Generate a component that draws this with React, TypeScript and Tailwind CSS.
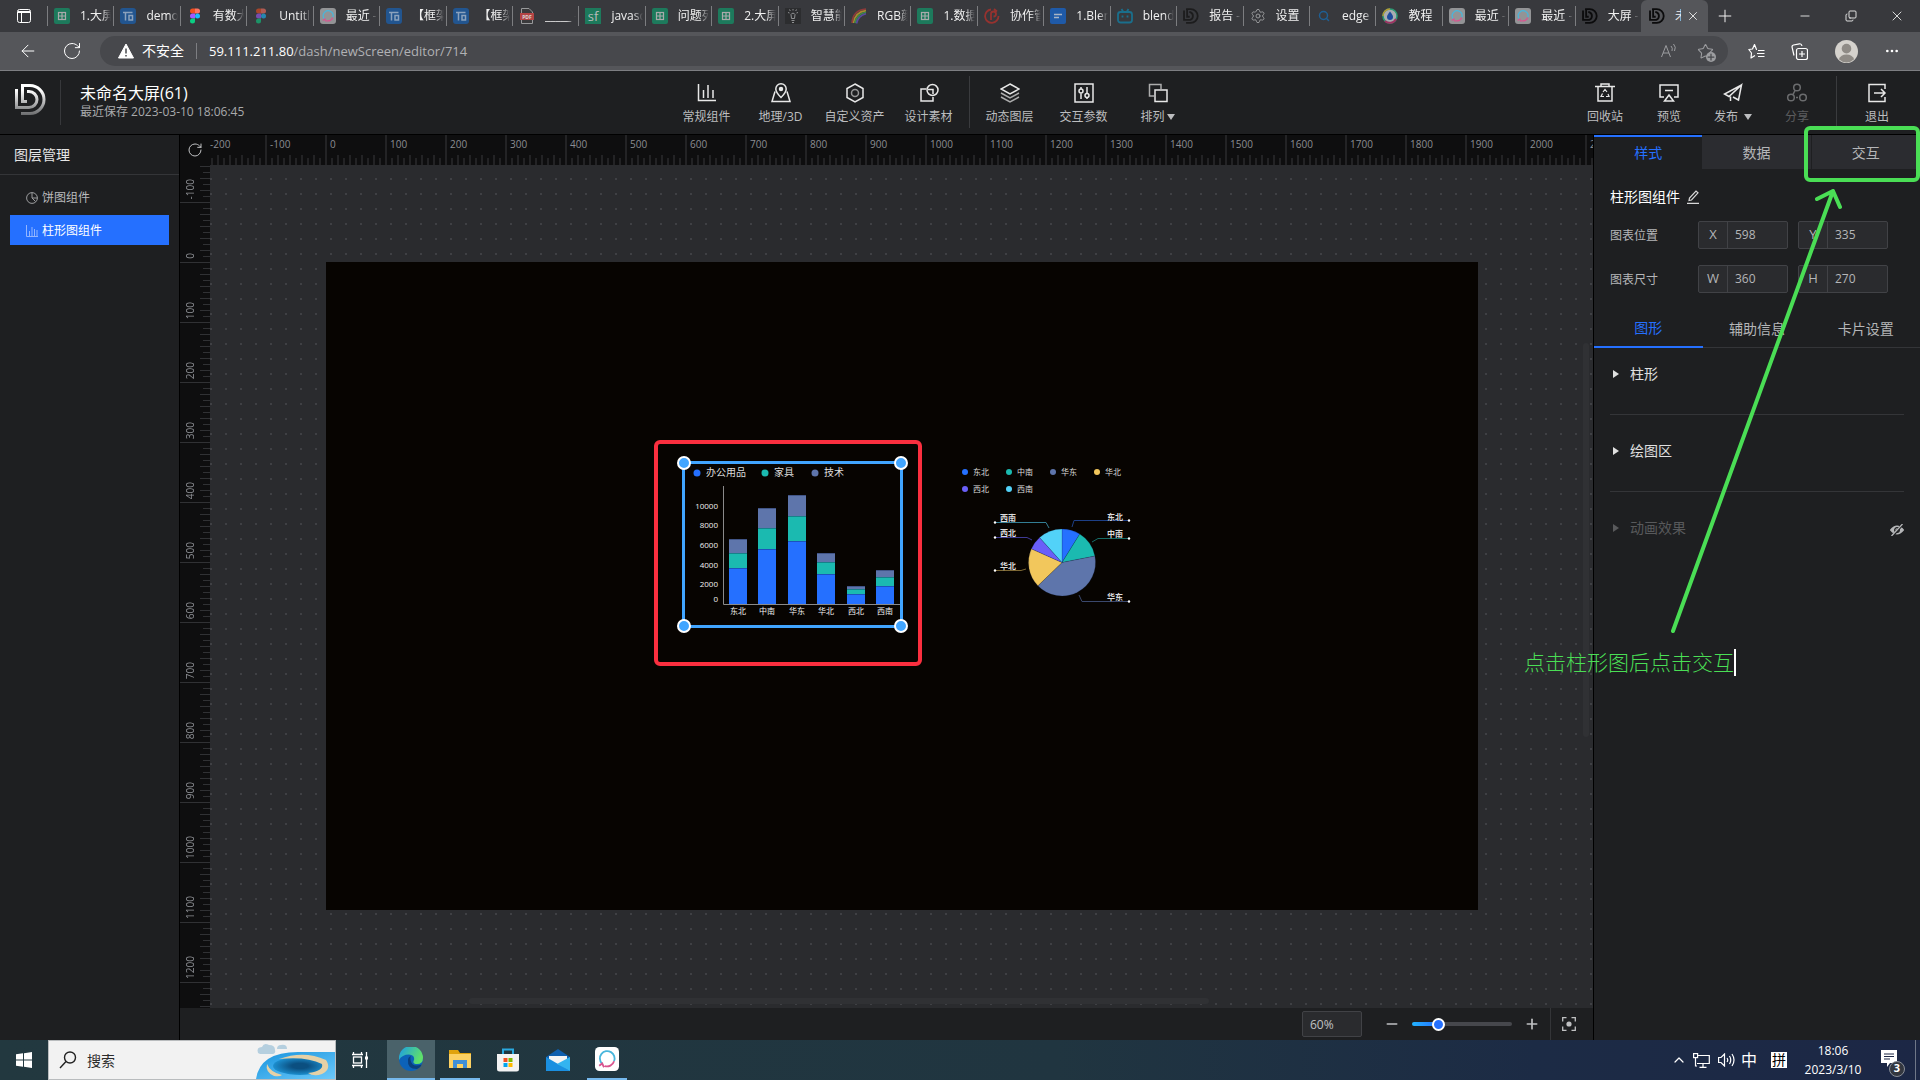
import type { ReactNode } from "react";
import { ArrowLeft, ChevronUp, Copy, Minus, MoreHorizontal, Plus, RotateCw, Search, Settings, Star, X } from "lucide-react";

function DLogo({ className, color = "currentColor" }: { className?: string; color?: string }) {
  return (
    <svg viewBox="0 0 31 31" className={className} fill="none" stroke={color} strokeWidth="3.500">
      <path d="M6 2H15A13.500 13.500 0 0 1 15 29H6" />
      <path d="M2 5V23H14A8 8 0 0 0 14 8H12" />
      <path d="M8 2V17H13" />
    </svg>
  );
}

function SheetIcon() {
  return (
    <svg viewBox="0 0 16 16" className="size-4 shrink-0">
      <rect width="16" height="16" rx="2" fill="#1d7a5c" />
      <rect x="4.500" y="4.500" width="7" height="7" fill="none" stroke="#a9aaab" strokeWidth="1.200" />
      <path d="M4 8H12M8 4V12" stroke="#a9aaab" strokeWidth="1.200" />
    </svg>
  );
}

function TowerIcon() {
  return (
    <svg viewBox="0 0 16 16" className="size-4 shrink-0">
      <rect width="16" height="16" rx="3" fill="#22558f" />
      <path d="M3 4.500H12.500M5.500 5V12.500M9 7.500H12.500V12H9Z" fill="none" stroke="#8ba2bd" strokeWidth="1.500" />
    </svg>
  );
}

function FigmaIcon({ dim }: { dim?: boolean }) {
  return (
    <svg viewBox="0 0 16 16" className={dim ? "size-4 shrink-0 opacity-60" : "size-4 shrink-0"}>
      <path d="M8 .5H5.500a2.500 2.500 0 0 0 0 5H8z" fill="#f24e1e" />
      <path d="M8 .5h2.500a2.500 2.500 0 0 1 0 5H8z" fill="#ff7262" />
      <path d="M8 5.500H5.500a2.500 2.500 0 0 0 0 5H8z" fill="#a259ff" />
      <circle cx="10.500" cy="8" r="2.500" fill="#1abcfe" />
      <path d="M8 10.500H5.500A2.500 2.500 0 1 0 8 13z" fill="#0acf83" />
    </svg>
  );
}

function RingIcon({ className = "size-4", bg = "#939496" }: { className?: string; bg?: string }) {
  return (
    <svg viewBox="0 0 16 16" className={className + " shrink-0"} fill="none" strokeWidth="1.200">
      <rect width="16" height="16" rx="3" fill={bg} />
      <path d="M4.600 11A4.900 4.900 0 1 1 12.700 9.500" stroke="#48b6dc" />
      <path d="M12.700 9.500A4.900 4.900 0 0 1 6.500 12.700M2.800 12.500L4.800 11L6 13.500" stroke="#d8558f" />
    </svg>
  );
}

function PdfIcon() {
  return (
    <svg viewBox="0 0 16 16" className="size-4 shrink-0">
      <path d="M2.500.5H10L13.500 4V15.500H2.500Z" fill="#3a3a3c" stroke="#98999b" />
      <rect x="1" y="5" width="14" height="7" fill="#b34444" />
      <text x="8" y="10.500" fontSize="5" fontWeight="700" fill="#d8d8d8" textAnchor="middle">PDF</text>
    </svg>
  );
}

function SfIcon() {
  return (
    <svg viewBox="0 0 16 16" className="size-4 shrink-0">
      <rect width="16" height="16" fill="#1d7a5c" />
      <text x="8" y="12.500" fontSize="13" fill="#b9bcbb" textAnchor="middle">sf</text>
    </svg>
  );
}

function BulbIcon() {
  return (
    <svg viewBox="0 0 16 16" className="size-4 shrink-0">
      <rect width="16" height="16" fill="#2c2d2f" />
      <path d="M6 6.500A2.200 2.200 0 0 1 10 6.500L9.500 10.500H6.500ZM6.500 12.500H9.500M7 14.500H9M8 1V2.500M4.500 1.500L5.300 3M11.500 1.500L10.700 3M3 4.500L4.500 5M13 4.500L11.500 5" fill="none" stroke="#8f9092" />
    </svg>
  );
}

function RainbowIcon() {
  return (
    <svg viewBox="0 0 16 16" className="size-4 shrink-0" fill="none" strokeWidth="1.600">
      <path d="M1 15Q2 2 15 1" stroke="#8f3a3a" />
      <path d="M2.500 15Q4 4 15 2.600" stroke="#a98a2f" />
      <path d="M4 15Q5.500 6 15 4.200" stroke="#3c8a4a" />
      <path d="M5.500 15.500Q7 8 15 5.800" stroke="#5b4aa0" />
    </svg>
  );
}

function SwirlIcon() {
  return (
    <svg viewBox="0 0 16 16" className="size-4 shrink-0" fill="none" stroke="#96322f" strokeWidth="1.800">
      <path d="M7 1.500A6.700 6.700 0 1 0 14.500 8" />
      <path d="M7 12V6A2.500 2.500 0 1 1 9.500 8.500M10 1L13 3.500" />
    </svg>
  );
}

function DocIcon() {
  return (
    <svg viewBox="0 0 16 16" className="size-4 shrink-0">
      <rect width="16" height="16" rx="2" fill="#1f5aa8" />
      <path d="M4 6.500H12M4 9.500H9" stroke="#a8b4c4" strokeWidth="1.500" />
    </svg>
  );
}

function TvIcon() {
  return (
    <svg viewBox="0 0 16 16" className="size-4 shrink-0" fill="none" stroke="#1a6f8c" strokeWidth="1.800">
      <rect x="1" y="4" width="14" height="10.500" rx="2.500" />
      <path d="M4.500 1L6 3.500M11.500 1L10 3.500M5.500 7.500V9.500M10.500 7.500V9.500" />
    </svg>
  );
}

function DropIcon() {
  return (
    <svg viewBox="0 0 16 16" className="size-4 shrink-0">
      <circle cx="8" cy="8" r="7" fill="#a9acb0" stroke="#2d9a73" strokeWidth="1.500" />
      <path d="M1 8A7 7 0 0 1 8 1" fill="none" stroke="#b79a33" strokeWidth="1.500" />
      <path d="M14 11A7 7 0 0 1 3 13" fill="none" stroke="#a03363" strokeWidth="2" />
      <path d="M8 3.500C10 6 11 7.500 11 9A3 3 0 0 1 5 9C5 7.500 6 6 8 3.500Z" fill="#1f4c9c" />
    </svg>
  );
}

const tabs: { title: string; icon: ReactNode }[] = [
  { title: "1.大屏", icon: <SheetIcon /> },
  { title: "demo", icon: <TowerIcon /> },
  { title: "有数大", icon: <FigmaIcon /> },
  { title: "Untitl", icon: <FigmaIcon dim /> },
  { title: "最近 -", icon: <RingIcon /> },
  { title: "【框架", icon: <TowerIcon /> },
  { title: "【框架", icon: <TowerIcon /> },
  { title: "_____ -", icon: <PdfIcon /> },
  { title: "javasc", icon: <SfIcon /> },
  { title: "问题列", icon: <SheetIcon /> },
  { title: "2.大屏", icon: <SheetIcon /> },
  { title: "智慧能", icon: <BulbIcon /> },
  { title: "RGB颜", icon: <RainbowIcon /> },
  { title: "1.数据", icon: <SheetIcon /> },
  { title: "协作管", icon: <SwirlIcon /> },
  { title: "1.Blen", icon: <DocIcon /> },
  { title: "blend", icon: <TvIcon /> },
  { title: "报告 -", icon: <DLogo className="size-4 shrink-0" color="#1c1c1d" /> },
  { title: "设置", icon: <Settings className="size-4 shrink-0 text-[#98999b]" strokeWidth={1.5} /> },
  { title: "edge", icon: <Search className="mx-0.5 size-3 shrink-0 text-[#1f5f93]" strokeWidth={3} /> },
  { title: "教程", icon: <DropIcon /> },
  { title: "最近 -", icon: <RingIcon /> },
  { title: "最近 -", icon: <RingIcon /> },
  { title: "大屏 -", icon: <DLogo className="size-4 shrink-0" color="#0b0b0c" /> },
];

function BrowserTabs() {
  return (
    <div className="flex h-8 bg-[#38393d] text-xs text-[#f0f0f0]">
      <button aria-label="标签页操作" className="flex w-[47px] items-center justify-center">
        <svg viewBox="0 0 14 14" className="size-3.5" fill="none" stroke="#fff">
          <rect x=".5" y=".5" width="13" height="13" rx="2" />
          <path d="M1 2.500H13M1 3.500H13M4.500 4V13" />
        </svg>
      </button>
      <div className="flex min-w-0 flex-1 items-center">
        {tabs.map((tab, i) => (
          <button key={i} className="flex h-5 min-w-0 flex-1 items-center gap-2.5 border-l border-[#7c7d80] pr-0.5 pl-1.5">
            {tab.icon}
            <span className="min-w-0 flex-1 overflow-hidden text-left whitespace-nowrap [mask-image:linear-gradient(90deg,#000_70%,transparent)]">
              {tab.title}
            </span>
          </button>
        ))}
      </div>
      <div className="flex w-[67px] items-center rounded-t-md bg-[#55565a] pr-2 pl-2">
        <DLogo className="size-4 shrink-0" color="#0b0b0c" />
        <span className="ml-2.5 w-1.5 overflow-hidden whitespace-nowrap">未</span>
        <button aria-label="关闭标签页" className="ml-auto">
          <X className="size-3.5" strokeWidth={1.5} />
        </button>
      </div>
      <button aria-label="新建标签页" className="mr-10 flex w-[34px] items-center justify-center">
        <Plus className="size-5" strokeWidth={1.2} />
      </button>
      <button aria-label="最小化" className="flex w-[46px] items-center justify-center">
        <Minus className="size-3.5" strokeWidth={1.5} />
      </button>
      <button aria-label="还原" className="flex w-[46px] items-center justify-center">
        <Copy className="size-3 -scale-x-100 rotate-180" strokeWidth={1.8} />
      </button>
      <button aria-label="关闭" className="flex w-[46px] items-center justify-center">
        <X className="size-4" strokeWidth={1.3} />
      </button>
    </div>
  );
}

function AddressBar() {
  return (
    <div className="flex h-[39px] items-center border-b border-[#7d7e82] bg-[#55565a] text-white">
      <button aria-label="后退" className="ml-[18px]">
        <ArrowLeft className="size-5" strokeWidth={1.2} />
      </button>
      <button aria-label="刷新" className="ml-6">
        <RotateCw className="size-5" strokeWidth={1.2} />
      </button>
      <div className="ml-[18px] flex h-[30px] min-w-0 flex-1 items-center rounded-full bg-[#47484c] pr-3.5 pl-[18px] text-sm">
        <svg viewBox="0 0 16 16" className="size-4 shrink-0">
          <path d="M8 1L15.500 15H.5Z" fill="#fff" stroke="#fff" strokeLinejoin="round" />
          <path d="M8 5.500V10.500M8 12V13.500" stroke="#47484c" strokeWidth="1.500" />
        </svg>
        <span className="ml-2 shrink-0">不安全</span>
        <span className="mx-3 h-4 w-px bg-[#7d7e82]" />
        <a href="#" className="flex-1 truncate text-[13px] text-[#b0b1b4]">
          <span className="text-white">59.111.211.80</span>/dash/newScreen/editor/714
        </a>
        <button aria-label="大声朗读" className="mr-5">
          <svg viewBox="0 0 16 16" className="size-4" fill="none" stroke="#9c9da0">
            <path d="M.5 14L5 2.500L9.500 14M2 10H8M10 3Q12 5 11 8M12.500 1Q15.500 4 13.500 8" />
          </svg>
        </button>
        <button aria-label="添加收藏" className="relative">
          <Star className="size-[17px] text-[#9c9da0]" strokeWidth={1.5} />
          <Plus className="absolute -right-0.5 -bottom-0.5 size-2.5 rounded-full bg-[#9c9da0] text-[#47484c]" strokeWidth={3} />
        </button>
      </div>
      <div className="flex w-[192px] shrink-0 items-center justify-between pr-5 pl-5">
        <button aria-label="收藏夹">
          <svg viewBox="0 0 17 17" className="size-[17px]" fill="none" stroke="#fff" strokeWidth="1.200">
            <path d="M9 6.500H8.500L6.500 1.500L4.500 6L.8 6.500L3.500 10L3 15L7 12.500M10 7.500H16.500M9 10.500H16.500M10 13.500H16.500" strokeLinejoin="round" />
          </svg>
        </button>
        <button aria-label="集锦">
          <svg viewBox="0 0 17 17" className="size-[17px]" fill="none" stroke="#fff" strokeWidth="1.200">
            <rect x="5.500" y="5.500" width="11" height="11" rx="2" />
            <path d="M11 8V14M8 11H14M3 12.500L1 4Q.8 2.500 2.500 2L8.500.8Q10.500.5 11 3" />
          </svg>
        </button>
        <button aria-label="个人资料">
          <svg viewBox="0 0 24 24" className="size-[23px]">
            <circle cx="12" cy="12" r="12" fill="#d5d2cd" />
            <circle cx="12" cy="9" r="5" fill="#8f8b86" />
            <path d="M4 20Q6 15 12 15T20 20Q12 27 4 20Z" fill="#8f8b86" />
          </svg>
        </button>
        <button aria-label="更多">
          <MoreHorizontal className="size-4" />
        </button>
      </div>
    </div>
  );
}

function ToolIcon({ children }: { children: ReactNode }) {
  return (
    <svg viewBox="0 0 20 20" className="size-5" fill="none" stroke="currentColor" strokeWidth="1.500">
      {children}
    </svg>
  );
}

function ToolButton({ label, icon, caret, wide, disabled }: { label: string; icon: ReactNode; caret?: "near" | "far"; wide?: boolean; disabled?: boolean }) {
  return (
    <button
      disabled={disabled}
      className={`flex flex-col items-center gap-1 pt-3 ${wide ? "w-[74px]" : "w-16"} ${disabled ? "text-[#6b6c6e]" : "text-[#e8e8e8]"}`}
    >
      <ToolIcon>{icon}</ToolIcon>
      <span className={`flex items-center text-xs leading-5 whitespace-nowrap ${disabled ? "text-[#5c5d5f]" : "text-[#bcbdbf]"}`}>
        {label}
        {caret && (
          <svg viewBox="0 0 8 6" className={caret === "far" ? "ml-1.5 h-1.5 w-2" : "ml-0.5 h-1.5 w-2"}>
            <path d="M0 0H8L4 6Z" fill="currentColor" />
          </svg>
        )}
      </span>
    </button>
  );
}

function Header() {
  return (
    <header className="flex h-16 border-b border-black bg-[#1e1f21]">
      <div className="flex w-[291px] shrink-0">
        <svg viewBox="0 0 31 31" className="mt-[13px] ml-[15px] size-[31px]" fill="none" stroke="url(#logo)" strokeWidth="3">
          <defs>
            <linearGradient id="logo" x1="0" y1="0" x2="0" y2="31" gradientUnits="userSpaceOnUse">
              <stop offset=".2" stopColor="#fff" />
              <stop offset="1" stopColor="#6a6b6d" />
            </linearGradient>
          </defs>
          <path d="M6 1.500H15A14 14 0 0 1 15 29.500H6" />
          <path d="M1.500 5V23.500H14A8 8 0 0 0 14 7.500H12" />
          <path d="M7.500 1.500V17.500H12" />
        </svg>
        <span className="mt-[9px] ml-3.5 h-[45px] w-px bg-[#37383b]" />
        <div className="ml-[19px] pt-[11px]">
          <h1 className="text-base leading-[22px] text-white">未命名大屏(61)</h1>
          <p className="text-xs leading-4 text-[#a9aaac]">最近保存 2023-03-10 18:06:45</p>
        </div>
      </div>
      <div className="mx-auto flex">
        <ToolButton wide label="常规组件" icon={<path d="M1.500 1V17.500H19M6.500 7V15M11 2V15M16 7V15" />} />
        <ToolButton
          wide
          label="地理/3D"
          icon={
            <>
              <path d="M4 8.500L1 18.500H19L16 8.500" />
              <path d="M10 14.500C6.500 11 4.800 8.500 4.800 6A5.200 5.200 0 0 1 15.200 6C15.200 8.500 13.500 11 10 14.500Z" />
              <circle cx="10" cy="6" r="1.500" fill="currentColor" />
            </>
          }
        />
        <ToolButton
          wide
          label="自定义资产"
          icon={
            <>
              <path d="M10 1L18 5.500V14.500L10 19L2 14.500V5.500Z" />
              <circle cx="10" cy="10" r="3.500" opacity=".6" />
            </>
          }
        />
        <ToolButton
          wide
          label="设计素材"
          icon={
            <>
              <path d="M7 6H2V18H14V14" />
              <circle cx="13.500" cy="7" r="5.500" />
              <path d="M9 6.500H14V11" />
            </>
          }
        />
        <span className="mx-[3px] mt-[5px] h-[52px] w-px bg-[#3a3b3e]" />
        <ToolButton
          wide
          label="动态图层"
          icon={
            <>
              <path d="M10 1L19 6L10 11L1 6Z" />
              <path d="M1 10L10 15L19 10M1 14L10 19L19 14" opacity=".7" />
            </>
          }
        />
        <ToolButton
          wide
          label="交互参数"
          icon={
            <>
              <rect x="1" y="1" width="18" height="18" />
              <path d="M7 4V6M7 10.500V16M13 4V10M13 14.500V16" />
              <circle cx="7" cy="8" r="2" />
              <circle cx="13" cy="12.500" r="2" />
            </>
          }
        />
        <ToolButton
          wide
          label="排列"
          caret="near"
          icon={
            <>
              <path d="M6 13H1.500V1.500H13V6" opacity=".7" />
              <rect x="7" y="7" width="12" height="11.500" />
            </>
          }
        />
      </div>
      <div className="flex shrink-0">
        <ToolButton
          label="回收站"
          icon={
            <>
              <path d="M0 3.500H20M3 4V18H17V4M6 3V1H14V3" />
              <path d="M8 9L10 6.500L12 9M13 11L14 13.500H11M9 13.500H6L7.500 10.500" strokeWidth="1.200" />
            </>
          }
        />
        <ToolButton label="预览" icon={<path d="M5 14H1V2H19V14H15M6 7.500H14M10 12L14.500 18H5.500Z" />} />
        <ToolButton label="发布" caret="far" icon={<path d="M18.500 2L1.500 11L6 13.500L18.500 2L15.500 17L10 14M7.500 18V13.500" />} />
        <ToolButton
          disabled
          label="分享"
          icon={
            <>
              <circle cx="10" cy="4.500" r="3.300" />
              <circle cx="4" cy="14.500" r="3.300" />
              <circle cx="16" cy="14.500" r="3.300" />
              <path d="M8 7.500L6 11.500M9 14.500H11" />
            </>
          }
        />
        <span className="mt-[5px] ml-[7px] h-[52px] w-px bg-[#3a3b3e]" />
        <span className="w-2" />
        <ToolButton label="退出" icon={<path d="M18 6V1.500H2V18.500H18V14M7 10H18M14 6L18 10L14 14" />} />
        <span className="w-[11px]" />
      </div>
    </header>
  );
}

function LayerPanel() {
  return (
    <aside className="w-[180px] shrink-0 border-r border-black bg-[#1e1f21]">
      <h2 className="flex h-10 items-center border-b border-[#343538] pl-3.5 text-sm text-[#e6e6e6]">图层管理</h2>
      <ul className="flex flex-col gap-[3px] px-2.5 pt-[7px] text-xs">
        <li>
          <button className="flex h-[30px] w-full items-center gap-1 pt-0.5 pl-4 text-[#b9babc]">
            <svg viewBox="0 0 12 12" className="size-3" fill="none" stroke="#9b9c9e">
              <circle cx="6" cy="6" r="5.400" />
              <path d="M6 .5V6H11.500M6 6L9.500 9.500" />
            </svg>
            饼图组件
          </button>
        </li>
        <li>
          <button className="flex h-[30px] w-full items-center gap-1 bg-[#2570ff] pt-0.5 pl-4 text-white">
            <svg viewBox="0 0 12 12" className="size-3" fill="none" stroke="#93b6ff">
              <path d="M.5 0V11.500H12M3.500 6V11M6 2V11M8.500 4V11M11 5V11" />
            </svg>
            柱形图组件
          </button>
        </li>
      </ul>
    </aside>
  );
}

const columns = Array.from({ length: 24 }, (_, i) => -200 + i * 100);
const rows = Array.from({ length: 15 }, (_, i) => -100 + i * 100);
const minor = [0, 1, 2, 3, 4, 5, 6, 7, 8];

function HorizontalRuler() {
  return (
    <div className="h-[30px] min-w-0 flex-1 overflow-hidden">
      <div className="-ml-[5px] flex h-full">
        {columns.map((n) => (
          <div key={n} className="flex h-full w-[60px] shrink-0 flex-col justify-between border-l-2 border-[#232325]">
            <span className="pt-0.5 pl-[3px] text-[10px] leading-[14px] text-[#8b8d92]">{n}</span>
            <div className="flex items-end gap-1 pl-1">
              {minor.map((m) => (
                <i key={m} className={m % 2 ? "h-2.5 w-0.5 bg-[#232325]" : "h-[7px] w-0.5 bg-[#232325]"} />
              ))}
            </div>
          </div>
        ))}
      </div>
    </div>
  );
}

function VerticalRuler() {
  return (
    <div className="relative w-[30px] shrink-0 overflow-hidden bg-[#0e0e0f]">
      <div className="absolute inset-x-0 -top-[22px]">
        {rows.map((n) => (
          <div key={n} className="flex h-[60px] justify-between border-b border-[#303134]">
            <span className="rotate-180 self-end pt-[3px] pr-[3px] text-[10px] leading-[14px] text-[#8b8d92] [writing-mode:vertical-rl]">
              {n}
            </span>
            <div className="flex flex-col items-end gap-[5px] pt-[5px]">
              {minor.map((m) => (
                <i key={m} className={m % 2 ? "h-px w-2.5 bg-[#303134]" : "h-px w-[7px] bg-[#303134]"} />
              ))}
            </div>
          </div>
        ))}
      </div>
    </div>
  );
}

const blue = "#2570ff";
const teal = "#1bbab0";
const slate = "#5e75ab";

// y values of the segment edges, from the top of the stack to the axis
const bars = [
  { name: "东北", x: 44, y: [76, 90, 105] },
  { name: "中南", x: 73, y: [45, 65, 86] },
  { name: "华东", x: 103, y: [32, 53, 78] },
  { name: "华北", x: 132, y: [90, 99, 111] },
  { name: "西北", x: 162, y: [123, 126, 131] },
  { name: "西南", x: 191, y: [107, 114, 123] },
];

const yAxis = [
  { label: "10000", y: 46 },
  { label: "8000", y: 65 },
  { label: "6000", y: 85 },
  { label: "4000", y: 105 },
  { label: "2000", y: 124 },
  { label: "0", y: 139 },
];

function BarChart() {
  return (
    <svg viewBox="0 0 216 162" className="h-[162px] w-[216px]" fill="#dcdcdc">
      <g fontSize="10">
        <circle cx="12" cy="10" r="3.500" fill={blue} />
        <text x="21" y="13">办公用品</text>
        <circle cx="80" cy="10" r="3.500" fill={teal} />
        <text x="89" y="13">家具</text>
        <circle cx="130" cy="10" r="3.500" fill={slate} />
        <text x="139" y="13">技术</text>
      </g>
      <path d="M38.500 23V141.500H215" fill="none" stroke="#8a8a8a" />
      {yAxis.map((t) => (
        <text key={t.label} x="33" y={t.y} fontSize="8" fill="#f0f0f0" textAnchor="end">{t.label}</text>
      ))}
      {bars.map((b) => (
        <g key={b.name}>
          <rect x={b.x} y={b.y[0]} width="18" height={b.y[1] - b.y[0]} fill={slate} />
          <rect x={b.x} y={b.y[1]} width="18" height={b.y[2] - b.y[1]} fill={teal} />
          <rect x={b.x} y={b.y[2]} width="18" height={141 - b.y[2]} fill={blue} />
          <path d={`M${b.x} ${b.y[0] + 0.5}h18M${b.x} ${b.y[1] + 0.5}h18M${b.x} ${b.y[2] + 0.5}h18`} stroke="#0b1b44" strokeOpacity=".35" />
          <text x={b.x + 9} y="151" fontSize="8" fill="#f0f0f0" textAnchor="middle">{b.name}</text>
        </g>
      ))}
    </svg>
  );
}

const slices = [
  { name: "东北", color: blue, from: 0, to: 32 },
  { name: "中南", color: teal, from: 32, to: 79 },
  { name: "华东", color: slate, from: 79, to: 226 },
  { name: "华北", color: "#f2c75c", from: 226, to: 294 },
  { name: "西北", color: "#6a5ff8", from: 294, to: 318 },
  { name: "西南", color: "#52d2f8", from: 318, to: 360 },
];

const legendSpots = [[10, 9], [54, 9], [98, 9], [142, 9], [10, 26], [54, 26]];

const callouts = [
  { name: "东北", color: "#1d3f86", line: "M117 64L119 57.500H174", x: 152, y: 57, dot: [174, 57.5] },
  { name: "中南", color: "#176a66", line: "M137 79L143 75.500H174", x: 152, y: 74, dot: [174, 75.5] },
  { name: "华东", color: "#3a486c", line: "M124 132L127 138.500H174", x: 152, y: 137, dot: [174, 138.5] },
  { name: "华北", color: "#7d6834", line: "M71 106L66 107.500H40", x: 45, y: 106, dot: [40, 107.5] },
  { name: "西北", color: "#3f3a95", line: "M77 77L72 74.500H40", x: 45, y: 73, dot: [40, 74.5] },
  { name: "西南", color: "#337e94", line: "M94 65L91 59.500H40", x: 45, y: 58, dot: [40, 59.5] },
];

function arc(from: number, to: number) {
  const point = (deg: number) => {
    const a = (deg * Math.PI) / 180;
    return `${107 + 33.5 * Math.sin(a)} ${99.5 - 33.5 * Math.cos(a)}`;
  };
  return `M107 99.500L${point(from)}A33.500 33.500 0 ${to - from > 180 ? 1 : 0} 1 ${point(to)}Z`;
}

function PieChart() {
  return (
    <svg viewBox="0 0 216 162" className="h-[162px] w-[216px]" fill="#dcdcdc" fontSize="8">
      {slices.map((s, i) => (
        <g key={s.name}>
          <circle cx={legendSpots[i][0]} cy={legendSpots[i][1]} r="3" fill={s.color} />
          <text x={legendSpots[i][0] + 8} y={legendSpots[i][1] + 3}>{s.name}</text>
          <path d={arc(s.from, s.to)} fill={s.color} stroke="#0b1b44" strokeOpacity=".3" strokeWidth=".6" />
        </g>
      ))}
      {callouts.map((c) => (
        <g key={c.name}>
          <path d={c.line} fill="none" stroke={c.color} />
          <circle cx={c.dot[0]} cy={c.dot[1]} r="1.200" fill="#fff" />
          <text x={c.x} y={c.y} fontWeight="700">{c.name}</text>
        </g>
      ))}
    </svg>
  );
}

function Canvas() {
  return (
    <div className="relative min-w-0 flex-1 overflow-hidden bg-[#2a2b2e] bg-[radial-gradient(circle_at_1px_1px,#3f4044_1px,transparent_1px)] bg-size-[15px_15px] bg-position-[0_13px]">
      <div className="absolute top-[97px] left-[116px] h-[648px] w-[1152px] bg-[#070401]">
        <div className="absolute top-[201px] left-[359px]">
          <BarChart />
        </div>
        <div className="absolute top-[201px] left-[629px]">
          <PieChart />
        </div>
        <div className="absolute top-[199px] left-[356px] h-[167px] w-[221px] border-[3px] border-[#41a5ff]">
          <i className="absolute -top-2 -left-2 size-3.5 rounded-full border-2 border-white bg-[#41a5ff]" />
          <i className="absolute -top-2 -right-2 size-3.5 rounded-full border-2 border-white bg-[#41a5ff]" />
          <i className="absolute -bottom-2 -left-2 size-3.5 rounded-full border-2 border-white bg-[#41a5ff]" />
          <i className="absolute -right-2 -bottom-2 size-3.5 rounded-full border-2 border-white bg-[#41a5ff]" />
        </div>
        <div className="absolute top-[178px] left-[328px] h-[226px] w-[268px] rounded-md border-4 border-[#fa2f3f]" />
      </div>
      <div className="absolute top-[178px] right-1 h-[394px] w-1.5 rounded-full bg-[#303134]" />
      <div className="absolute bottom-1 left-[259px] h-1.5 w-[740px] rounded-full bg-[#303134]" />
    </div>
  );
}

function ZoomBar() {
  return (
    <div className="flex h-8 items-center justify-end bg-[#1e1f21] text-[#c0c1c3]">
      <input
        aria-label="缩放比例"
        defaultValue="60%"
        className="h-[26px] w-[60px] rounded-xs border border-[#414246] bg-[#2a2b2e] pl-[7px] text-xs"
      />
      <button aria-label="缩小" className="ml-[22px]">
        <Minus className="size-4" strokeWidth={2.5} />
      </button>
      <input
        type="range"
        aria-label="缩放"
        min={0}
        max={100}
        defaultValue={23}
        className="ml-3 h-1 w-[100px] appearance-none rounded-full bg-[linear-gradient(90deg,#22b4ff,#2570ff_26%,#46474c_26%)] [&::-webkit-slider-thumb]:size-[13px] [&::-webkit-slider-thumb]:appearance-none [&::-webkit-slider-thumb]:rounded-full [&::-webkit-slider-thumb]:border-2 [&::-webkit-slider-thumb]:border-white [&::-webkit-slider-thumb]:bg-[#2570ff]"
      />
      <button aria-label="放大" className="ml-3">
        <Plus className="size-4" strokeWidth={2.5} />
      </button>
      <span className="ml-2.5 h-full w-px bg-[#343538]" />
      <button aria-label="适应屏幕" className="flex w-[42px] justify-center pr-1.5">
        <svg viewBox="0 0 14 14" className="size-3.5" fill="none" stroke="currentColor" strokeWidth="1.300">
          <path d="M.7 4.500V.7H4.500M9.500.7H13.300V4.500M13.300 9.500V13.300H9.500M4.500 13.300H.7V9.500" />
          <circle cx="7" cy="7" r="2.600" fill="currentColor" stroke="none" />
        </svg>
      </button>
    </div>
  );
}

function NumberField({ name, value, label }: { name: string; value: string; label: string }) {
  return (
    <label className="flex h-7 w-[90px] rounded-xs border border-[#414246] bg-[#2a2b2e] text-[#b5b6b8]">
      <span className="flex w-[29px] items-center justify-center border-r border-[#414246] text-[13px]">{name}</span>
      <input aria-label={`${label} ${name}`} defaultValue={value} className="w-full min-w-0 flex-1 pl-[7px] text-xs" />
    </label>
  );
}

function FieldRow({ label, fields }: { label: string; fields: [string, string][] }) {
  return (
    <div className="flex items-center gap-2.5 pl-4">
      <span className="w-[78px] pt-0.5 text-xs text-[#b5b6b8]">{label}</span>
      {fields.map(([name, value]) => (
        <NumberField key={name} name={name} value={value} label={label} />
      ))}
    </div>
  );
}

const sections = [
  { title: "柱形", off: false },
  { title: "绘图区", off: false },
  { title: "动画效果", off: true },
];

function StylePanel() {
  return (
    <aside className="w-[327px] shrink-0 border-l border-black bg-[#1e1f21]">
      <nav className="flex h-[34px] text-sm text-[#b5b6b8]">
        <button className="flex-1 border-t-2 border-[#2570ff] text-[#2570ff]">样式</button>
        <button className="flex-1 bg-[#2b2c30] pt-0.5">数据</button>
        <button className="flex-1 border-l border-[#1e1f21] bg-[#2b2c30] pt-0.5">交互</button>
      </nav>
      <div className="mt-[18px] mb-3.5 flex h-5 items-center gap-1.5 pl-4">
        <h2 className="text-sm text-white">柱形图组件</h2>
        <button aria-label="重命名">
          <svg viewBox="0 0 14 14" className="size-3.5" fill="none" stroke="#d8d8d8" strokeWidth="1.200">
            <path d="M1 13.300H13M3 10.500L3.500 8L10 1L12 2.800L5.500 10Z" />
          </svg>
        </button>
      </div>
      <div className="flex flex-col gap-4">
        <FieldRow label="图表位置" fields={[["X", "598"], ["Y", "335"]]} />
        <FieldRow label="图表尺寸" fields={[["W", "360"], ["H", "270"]]} />
      </div>
      <nav className="mt-[17px] flex h-[38px] text-sm text-[#b5b6b8]">
        <button className="flex-1 border-b-2 border-[#2570ff] text-[#2570ff]">图形</button>
        <button className="flex-1 border-b border-[#343538]">辅助信息</button>
        <button className="flex-1 border-b border-[#343538]">卡片设置</button>
      </nav>
      <div className="px-4">
        {sections.map((s) => (
          <section key={s.title} className="flex items-center border-b border-[#343538] pt-[26px] pb-[30px] first:pt-4 last:border-0">
            <button
              disabled={s.off}
              className={`flex h-5 items-center gap-[11px] pl-[3px] text-sm ${s.off ? "text-[#58595b]" : "text-[#e0e0e0]"}`}
            >
              <svg viewBox="0 0 6 8" className="h-2 w-1.5">
                <path d="M0 0L6 4L0 8Z" fill="currentColor" />
              </svg>
              {s.title}
            </button>
            {s.off && (
              <button aria-label="显示动画效果" className="ml-auto pt-1">
                <svg viewBox="0 0 14 12" className="h-3 w-3.5" fill="none" stroke="#b5b6b8" strokeWidth="1.300">
                  <path d="M.7 6Q7-1.500 13.300 6Q7 13.500.7 6Z" fill="#b5b6b8" />
                  <circle cx="7" cy="6" r="2.300" stroke="#1e1f21" />
                  <path d="M2.500 12L12.500.5" stroke="#1e1f21" strokeWidth="2.500" />
                  <path d="M1.500 12L12.500 0" />
                </svg>
              </button>
            )}
          </section>
        ))}
      </div>
    </aside>
  );
}

function Annotations() {
  return (
    <>
      <div className="absolute top-[126px] right-0 h-14 w-[116px] rounded-md border-4 border-[#4ade55]" />
      <svg viewBox="0 0 260 460" className="pointer-events-none absolute top-[180px] right-0 h-[460px] w-[260px]" fill="none" stroke="#4ade55" strokeWidth="4" strokeLinecap="round" strokeLinejoin="round">
        <path d="M13 451L173 11M157 19L173 11L180 27" />
      </svg>
      <p className="absolute top-[649px] right-[184px] border-r-2 border-white text-[21px] leading-[27px] font-light whitespace-nowrap text-[#4ade55]">
        点击柱形图后点击交互
      </p>
    </>
  );
}

function Taskbar() {
  return (
    <footer className="flex h-10 items-center bg-[linear-gradient(90deg,#22383f,#203540_55%,#1c2b45_80%,#1c2745)] text-xs text-white">
      <button aria-label="开始" className="flex w-12 justify-center">
        <svg viewBox="0 0 16 16" className="size-4" fill="#fff">
          <path d="M0 2.300L7 1.300V7.500H0ZM8 1.200L16 0V7.500H8ZM0 8.500H7V14.700L0 13.700ZM8 8.500H16V16L8 14.800Z" />
        </svg>
      </button>
      <div className="flex h-full w-72 items-center border border-[#b9bcbe] bg-[#f2f2f2] pl-2.5">
        <svg viewBox="0 0 18 18" className="size-[18px] shrink-0" fill="none" stroke="#222" strokeWidth="1.400">
          <circle cx="11" cy="6.500" r="5.500" />
          <path d="M7 10.500L1 17" />
        </svg>
        <input aria-label="搜索" placeholder="搜索" className="ml-2.5 min-w-0 flex-1 pt-0.5 text-sm text-black placeholder:text-[#2c2c2c]" />
        <svg viewBox="0 0 79 38" className="h-[38px] w-[79px] shrink-0">
          <defs>
            <linearGradient id="sea" x1="0" y1="0" x2="1" y2="1">
              <stop offset="0" stopColor="#1793dd" />
              <stop offset="1" stopColor="#6cc9fb" />
            </linearGradient>
            <radialGradient id="hole">
              <stop offset=".3" stopColor="#0b4f80" />
              <stop offset="1" stopColor="#1c8fd0" />
            </radialGradient>
          </defs>
          <path d="M2 12Q0 6 6 6Q8 1 13 4Q19 4 19 9Q20 12 17 13H4ZM21 8Q21 4 25 4Q31 3 31 8Z" fill="#b5cfdf" />
          <path d="M0 38Q4 11 42 11H79V38Z" fill="url(#sea)" />
          <ellipse cx="44" cy="25" rx="27" ry="9" fill="url(#hole)" />
          <path d="M23 18Q48 9 70 19Q76 28 66 33Q58 36 52 32Q68 30 66 23Q50 15 23 18ZM11 23Q14 31 26 34Q24 36 18 35Q9 31 11 23Z" fill="#e6d1a6" />
        </svg>
      </div>
      <button aria-label="任务视图" className="flex w-[51px] justify-center pr-1">
        <svg viewBox="0 0 16 16" className="size-4" fill="none" stroke="#fff" strokeWidth="1.300">
          <path d="M0 2.500H11M0 13.500H11M1.500 0V2M9.500 0V2M1.500 14V16M9.500 14V16M14.500 0V16" />
          <rect x="1.500" y="5" width="8" height="6" />
          <path d="M13 6H16" strokeWidth="3" />
        </svg>
      </button>
      <button aria-label="Edge" className="flex h-full w-12 items-center justify-center border-b-2 border-[#76b9ed] bg-[#4a626a]">
        <svg viewBox="0 0 24 24" className="size-6">
          <defs>
            <linearGradient id="edge" x1="0" y1="0" x2="1" y2=".4">
              <stop offset="0" stopColor="#1a9be8" />
              <stop offset="1" stopColor="#5fe06a" />
            </linearGradient>
          </defs>
          <circle cx="12" cy="12" r="12" fill="#0c62b8" />
          <path d="M0 11A12 12 0 0 1 24 11Q24 17 18 17Q13 17 15 13Q16 8 10 7.500Q3 7.500 0 13Z" fill="url(#edge)" />
          <path d="M9 13Q8 22 18 22Q22 20 22.500 17.500Q13 21 11.500 13Q11 10 12 9Q9 10 9 13Z" fill="#0a3f7c" />
        </svg>
      </button>
      <button aria-label="文件资源管理器" className="ml-[5px] flex h-full w-10 items-center justify-center border-b-2 border-[#76b9ed]">
        <svg viewBox="0 0 22 20" className="h-5 w-[22px]">
          <path d="M0 1H9L11 4H22V19H0Z" fill="#e0a30d" />
          <path d="M0 5H22V19H0Z" fill="#fcd163" />
          <path d="M4 19V11H18V19H14V15H8V19Z" fill="#3f8fd8" />
        </svg>
      </button>
      <button aria-label="应用商店" className="flex w-14 justify-center">
        <svg viewBox="0 0 22 24" className="h-6 w-[22px]">
          <path d="M6 7V1.500H16V7" fill="none" stroke="#2aa9e0" strokeWidth="2" />
          <path d="M0 6H22V21Q22 23.500 19.500 23.500H2.500Q0 23.500 0 21Z" fill="#f3f3f3" />
          <path d="M6.500 10H10.500V14H6.500Z" fill="#f25022" />
          <path d="M11.500 10H15.500V14H11.500Z" fill="#7fba00" />
          <path d="M6.500 15H10.500V19H6.500Z" fill="#00a4ef" />
          <path d="M11.500 15H15.500V19H11.500Z" fill="#ffb900" />
        </svg>
      </button>
      <button aria-label="邮件" className="flex w-11 justify-center">
        <svg viewBox="0 0 24 22" className="h-[22px] w-6">
          <path d="M0 8L12 0L24 8V22H0Z" fill="#0f5fae" />
          <path d="M3 7H21V12L12 16L3 12Z" fill="#f4f4f4" />
          <path d="M0 8L24 22H0Z" fill="#1a8fe0" />
          <path d="M24 8L11 15L24 22Z" fill="#33b4f0" />
        </svg>
      </button>
      <button aria-label="应用" className="ml-[7px] flex h-full w-10 items-center justify-center border-b-2 border-[#76b9ed]">
        <RingIcon className="size-6" bg="#ffffff" />
      </button>
      <div className="ml-auto flex h-full items-center">
        <ChevronUp className="mr-1.5 size-4" strokeWidth={1.8} />
        <svg viewBox="0 0 17 15" className="mr-2 h-[15px] w-[17px]" fill="none" stroke="#fff" strokeWidth="1.200">
          <path d="M5 2.500H16.300V10.500H4M10 11V14M6.500 14.300H13.500M2.500 5V13H4" />
          <rect x=".6" y=".6" width="4" height="4" />
        </svg>
        <svg viewBox="0 0 17 14" className="mr-1.5 h-3.5 w-[17px]" fill="none" stroke="#fff" strokeWidth="1.200">
          <path d="M.6 4.500H3L6.500 1V13L3 9.500H.6ZM9 5Q10.500 7 9 9M11.500 3Q14 7 11.500 11M14 1Q18 7 14 13" />
        </svg>
        <span className="mr-3.5 text-base">中</span>
        <span className="mr-4 flex size-4 items-center justify-center bg-white text-sm leading-4 text-black">拼</span>
        <time className="w-[60px] text-center leading-[19px]">
          18:06
          <br />
          2023/3/10
        </time>
        <button aria-label="通知" className="relative ml-[18px] flex w-[34px] pb-1">
          <svg viewBox="0 0 16 17" className="h-[17px] w-4">
            <path d="M0 0H16V13H9L6 17V13H0Z" fill="#fff" />
            <path d="M3 4H13M3 6.500H13M3 9H9" stroke="#1c2745" />
          </svg>
          <span className="absolute -bottom-1.5 left-2 flex size-4 items-center justify-center rounded-full border border-[#8a8f98] bg-[#33373f] text-[11px] font-bold">
            3
          </span>
        </button>
        <span className="h-full w-[5px] border-l border-[#6f7788]" />
      </div>
    </footer>
  );
}

export default function App() {
  return (
    <div className="relative flex min-h-screen flex-col overflow-hidden bg-[#1e1f21] font-['Open_Sans','Noto_Sans_CJK_SC',sans-serif]">
      <BrowserTabs />
      <AddressBar />
      <Header />
      <main className="flex flex-1">
        <LayerPanel />
        <div className="flex min-w-0 flex-1 flex-col">
          <div className="flex bg-[#0e0e0f]">
            <button aria-label="重置画布" className="flex size-[30px] items-center justify-center">
              <RotateCw className="size-4 text-[#c0c1c3]" strokeWidth={1.5} />
            </button>
            <HorizontalRuler />
          </div>
          <div className="flex flex-1">
            <VerticalRuler />
            <Canvas />
          </div>
          <ZoomBar />
        </div>
        <StylePanel />
      </main>
      <Taskbar />
      <Annotations />
    </div>
  );
}
